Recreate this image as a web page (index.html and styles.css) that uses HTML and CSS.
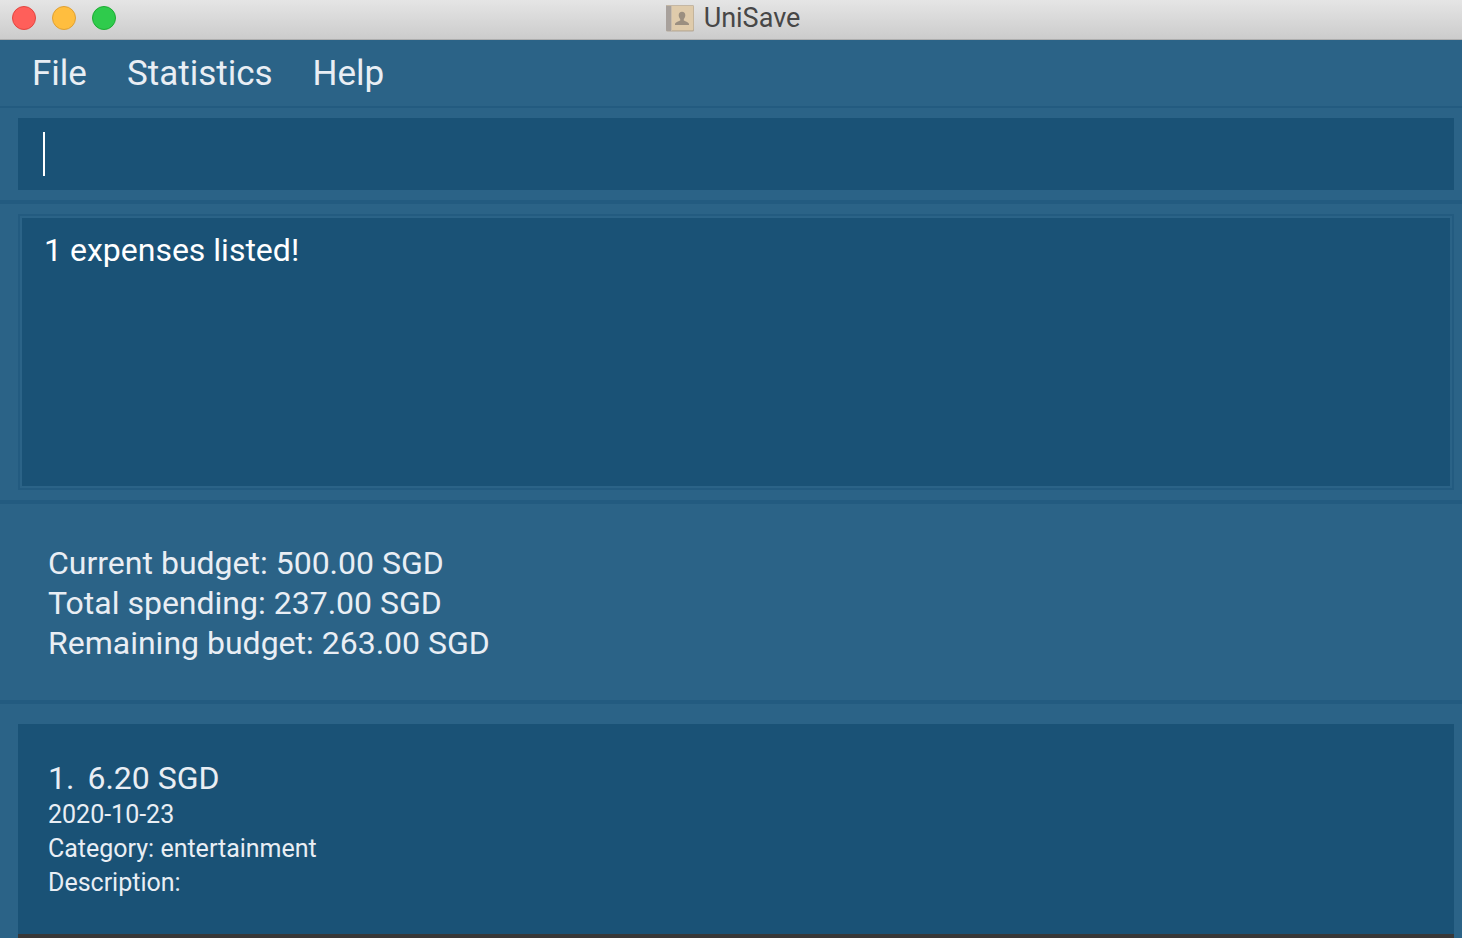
FILE: index.html
```html
<!DOCTYPE html>
<html lang="en">
<head>
<meta charset="utf-8">
<title>UniSave</title>
<link rel="stylesheet" href="styles.css">
</head>
<body>
<div class="window">
  <header class="titlebar">
    <div class="lights">
      <button class="light light-close" type="button" aria-label="Close"></button>
      <button class="light light-min" type="button" aria-label="Minimize"></button>
      <button class="light light-zoom" type="button" aria-label="Zoom"></button>
    </div>
    <h1 class="title">
      <svg class="book" viewBox="0 0 28 28" aria-hidden="true">
        <rect x="0" y="1" width="28" height="26.500" rx="1.5" fill="#b5a896"/>
        <rect x="0" y="1" width="27.500" height="25.500" rx="1.500" fill="#d3bf9f"/>
        <rect x="6" y="2" width="21" height="24" fill="#dfcbab"/>
        <path d="M1.500 1H5v26H1.500A1.500 1.500 0 0 1 0 25.500v-23A1.500 1.500 0 0 1 1.500 1z" fill="#a8a19c"/>
        <path d="M5.500 1v26" stroke="#c9bdac"/>
        <path d="M1 1.500h26" stroke="#c4b7a4"/>
        <path d="M16 7.800c-2.100 0-3.300 1.500-3.300 3.500 0 1.500.6 2.800 1.500 3.600v1.500c-1.200.9-4.700 1.200-5.200 3.600v.9h14V20c-.5-2.400-4-2.700-5.200-3.600v-1.500c.9-.8 1.500-2.100 1.500-3.600 0-2-1.200-3.500-3.300-3.500z" fill="#9b8f80"/>
      </svg>
      <span>UniSave</span>
    </h1>
  </header>
  <nav class="menubar" aria-label="Main menu">
    <button class="menu" type="button">File</button>
    <button class="menu" type="button">Statistics</button>
    <button class="menu" type="button">Help</button>
  </nav>
  <main class="panes">
    <section class="pane command-pane">
      <input class="command" type="text" aria-label="Command">
      <span class="caret"></span>
    </section>
    <section class="pane result-pane">
      <div class="result-frame">
        <textarea class="result" aria-label="Result" readonly>1 expenses listed!</textarea>
      </div>
    </section>
    <section class="pane budget-pane">
      <p class="line">Current budget: 500.00 SGD</p>
      <p class="line">Total spending: 237.00 SGD</p>
      <p class="line">Remaining budget: 263.00 SGD</p>
    </section>
    <section class="list-pane">
      <div class="list">
        <article class="card">
          <h2 class="amount"><span>1.</span><span>6.20 SGD</span></h2>
          <p class="detail">2020-10-23</p>
          <p class="detail">Category: entertainment</p>
          <p class="detail">Description:</p>
        </article>
      </div>
    </section>
  </main>
</div>
</body>
</html>
```
FILE: styles.css
```css
* { box-sizing: border-box; margin: 0; }

body {
  font-family: Roboto, "Liberation Sans", sans-serif;
  background: #2b6387;
  color: #e9eef4;
}

button, input, textarea { font: inherit; color: inherit; border: 0; background: none; padding: 0; }

.window { height: 100vh; display: flex; flex-direction: column; overflow: hidden; }

.titlebar {
  display: grid;
  grid-template-columns: 1fr auto 1fr;
  align-items: center;
  height: 40px;
  padding: 0 8px 4px 12px;
  background: linear-gradient(#e5e5e5, #cccccc);
  border-bottom: 1px solid #aeaeae;
}
.lights { display: flex; gap: 16px; }
.light { width: 24px; height: 24px; border-radius: 50%; border: 1px solid; }
.light-close { background: #ff5f5a; border-color: #e24640; }
.light-min { background: #ffbe3f; border-color: #dfa034; }
.light-zoom { background: #2fcb4c; border-color: #1dac33; }
.title {
  display: flex;
  align-items: center;
  gap: 10px;
  font-size: 27px;
  line-height: 34px;
  font-weight: 400;
  color: #474747;
}
.book { width: 28px; height: 28px; }

.menubar {
  display: flex;
  gap: 40px;
  padding: 2px 32px 0;
  border-bottom: 2px solid #235b80;
}
.menu { font-size: 35px; line-height: 64px; }

.panes { flex: 1; display: flex; flex-direction: column; min-height: 0; }
.pane { flex: none; border-bottom: 4px solid #235b80; }

.command-pane { position: relative; padding: 10px 8px 10px 18px; }
.command {
  display: block;
  width: 100%;
  height: 72px;
  padding: 0 26px;
  background: #1a5276;
  font-size: 32px;
  color: #fff;
  caret-color: #fff;
  outline: 0;
}
.caret { position: absolute; left: 43px; top: 24px; width: 2px; height: 44px; background: #fff; }

.result-pane { padding: 10px 8px 10px 18px; }
.result-frame { border: 2px solid #235b80; padding: 2px; }
.result {
  display: block;
  width: 100%;
  height: 268px;
  padding: 12px 22px;
  background: #1a5276;
  color: #fff;
  font-size: 32px;
  line-height: 40px;
  resize: none;
  outline: 0;
}

.budget-pane { padding: 39px 48px 37px; }
.line { font-size: 32px; line-height: 40px; }

.list-pane { flex: 1; padding: 20px 8px 0 18px; min-height: 0; }
.list { height: 100%; background: #383838; }
.card { padding: 34px 30px; background: #1a5276; }
.amount { display: flex; gap: 13px; font-size: 32px; line-height: 40px; font-weight: 400; }
.detail { font-size: 25px; line-height: 34px; }
```
